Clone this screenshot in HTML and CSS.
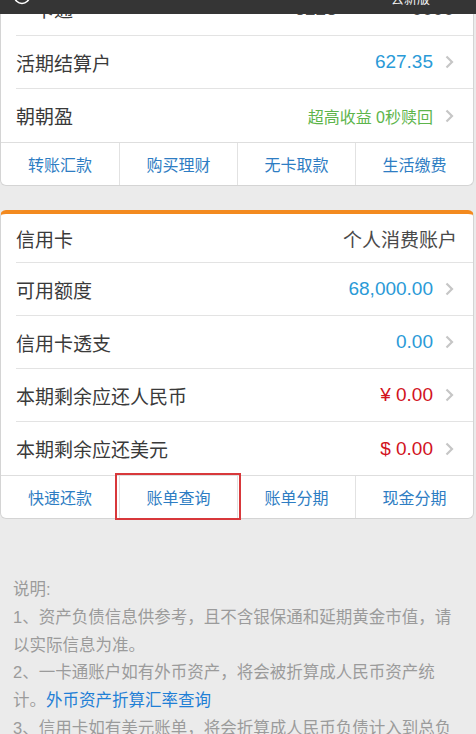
FILE: index.html
```html
<!DOCTYPE html>
<html lang="zh-CN">
<head>
    <meta charset="UTF-8">
    <meta name="viewport" content="width=device-width, initial-scale=1.0">
    <title>我的账户</title>
    <link rel="stylesheet" href="styles.css">
</head>
<body>
    <!-- 顶部导航（已滚动，只露出下沿） -->
    <header class="topbar">
        <div class="topbar-inner">
            <svg class="topbar-icon" width="18" height="18" viewBox="0 0 18 18">
                <circle cx="9" cy="9" r="7.5" fill="none" stroke="#ffffff" stroke-width="1.6"/>
            </svg>
            <span class="topbar-link">去新版</span>
        </div>
    </header>

    <main class="page">
        <!-- 一卡通 -->
        <section class="card card-first">
            <div class="row">
                <span class="label">一卡通</span>
                <span class="value value-dark">6228 **** **** 0000</span>
            </div>
            <div class="row">
                <span class="label">活期结算户</span>
                <span class="value value-blue">627.35</span>
                <svg class="chevron" width="9" height="14" viewBox="0 0 9 14"><polyline points="1.5,1.5 7,7 1.5,12.5" fill="none" stroke="#c6c6c6" stroke-width="2.2"/></svg>
            </div>
            <div class="row row-last">
                <span class="label">朝朝盈</span>
                <span class="value value-green">超高收益 0秒赎回</span>
                <svg class="chevron" width="9" height="14" viewBox="0 0 9 14"><polyline points="1.5,1.5 7,7 1.5,12.5" fill="none" stroke="#c6c6c6" stroke-width="2.2"/></svg>
            </div>
            <div class="actions">
                <a class="action">转账汇款</a>
                <a class="action">购买理财</a>
                <a class="action">无卡取款</a>
                <a class="action">生活缴费</a>
            </div>
        </section>

        <!-- 信用卡 -->
        <section class="card card-credit">
            <div class="row row-head">
                <span class="label">信用卡</span>
                <span class="value value-dark">个人消费账户</span>
            </div>
            <div class="row">
                <span class="label">可用额度</span>
                <span class="value value-blue">68,000.00</span>
                <svg class="chevron" width="9" height="14" viewBox="0 0 9 14"><polyline points="1.5,1.5 7,7 1.5,12.5" fill="none" stroke="#c6c6c6" stroke-width="2.2"/></svg>
            </div>
            <div class="row">
                <span class="label">信用卡透支</span>
                <span class="value value-blue">0.00</span>
                <svg class="chevron" width="9" height="14" viewBox="0 0 9 14"><polyline points="1.5,1.5 7,7 1.5,12.5" fill="none" stroke="#c6c6c6" stroke-width="2.2"/></svg>
            </div>
            <div class="row">
                <span class="label">本期剩余应还人民币</span>
                <span class="value value-red">¥ 0.00</span>
                <svg class="chevron" width="9" height="14" viewBox="0 0 9 14"><polyline points="1.5,1.5 7,7 1.5,12.5" fill="none" stroke="#c6c6c6" stroke-width="2.2"/></svg>
            </div>
            <div class="row row-last">
                <span class="label">本期剩余应还美元</span>
                <span class="value value-red">$ 0.00</span>
                <svg class="chevron" width="9" height="14" viewBox="0 0 9 14"><polyline points="1.5,1.5 7,7 1.5,12.5" fill="none" stroke="#c6c6c6" stroke-width="2.2"/></svg>
            </div>
            <div class="actions">
                <a class="action">快速还款</a>
                <a class="action action-marked">账单查询</a>
                <a class="action">账单分期</a>
                <a class="action">现金分期</a>
            </div>
        </section>

        <!-- 说明 -->
        <div class="notes">
            <p>说明:</p>
            <p>1、资产负债信息供参考，且不含银保通和延期黄金市值，请以实际信息为准。</p>
            <p>2、一卡通账户如有外币资产，将会被折算成人民币资产统计。<a class="notes-link">外币资产折算汇率查询</a></p>
            <p>3、信用卡如有美元账单，将会折算成人民币负债计入到总负债中。</p>
        </div>
    </main>
</body>
</html>
```

FILE: styles.css
```css
body {
    margin: 0;
    background-color: #ebebeb;
    font-family: "Liberation Sans", "Noto Sans CJK SC", sans-serif;
    color: #3a3a3a;
}

/* barra superior */
.topbar {
    position: fixed;
    top: 0;
    left: 0;
    right: 0;
    height: 14px;
    background-color: #353535;
    overflow: hidden;
    z-index: 10;
}

.topbar-inner {
    display: flex;
    justify-content: space-between;
    align-items: flex-end;
    height: 14px;
    margin-top: -9px;
    padding: 0 46px 0 13px;
}

.topbar-icon {
    display: block;
}

.topbar-link {
    color: #f2f2f2;
    font-size: 13px;
    line-height: 13px;
}

.page {
    overflow: hidden;
}

/* tarjetas */
.card {
    background-color: #ffffff;
    border: 1px solid #d4d4d4;
    border-radius: 6px;
    margin: 0 2px 0 0;
}

.card-first {
    margin-top: -18px;
    border-top: none;
    border-radius: 0 0 6px 6px;
}

.card-credit {
    margin-top: 24px;
    border-top: 4px solid #f38a1f;
}

.row {
    display: flex;
    align-items: center;
    height: 52px;
    margin-left: 15px;
    padding-right: 19px;
    border-bottom: 1px solid #e3e3e3;
}

.card-first .row:first-child {
    height: 53px;
}

.row-head {
    height: 48px;
    padding-right: 16px;
}

.row-last {
    border-bottom: none;
    height: 53px;
}

.label {
    font-size: 19px;
    flex: 1;
}

.value {
    font-size: 19px;
}

.value-dark {
    color: #4a4a4a;
}

.value-blue {
    color: #2a9ad7;
}

.value-green {
    font-size: 16px;
    color: #5db54b;
}

.value-red {
    color: #d2131d;
}

.chevron {
    margin-left: 12px;
    flex: none;
}

/* botones inferiores */
.actions {
    display: grid;
    grid-template-columns: repeat(4, 1fr);
    border-top: 1px solid #dedede;
    height: 42px;
}

.action {
    display: flex;
    align-items: center;
    justify-content: center;
    font-size: 16px;
    color: #2e7dc3;
    border-left: 1px solid #e2e2e2;
    position: relative;
}

.action:first-child {
    border-left: none;
}

/* recuadro rojo de la captura */
.action-marked::after {
    content: "";
    position: absolute;
    left: -5px;
    right: -4px;
    top: -3px;
    bottom: -2px;
    border: 2px solid #d8383b;
}

/* notas */
.notes {
    padding: 57px 18px 0 13px;
    font-size: 16.5px;
    line-height: 27.8px;
    color: #9b9b9b;
}

.notes p {
    margin: 0;
}

.notes-link {
    color: #1f7fd6;
}
```
